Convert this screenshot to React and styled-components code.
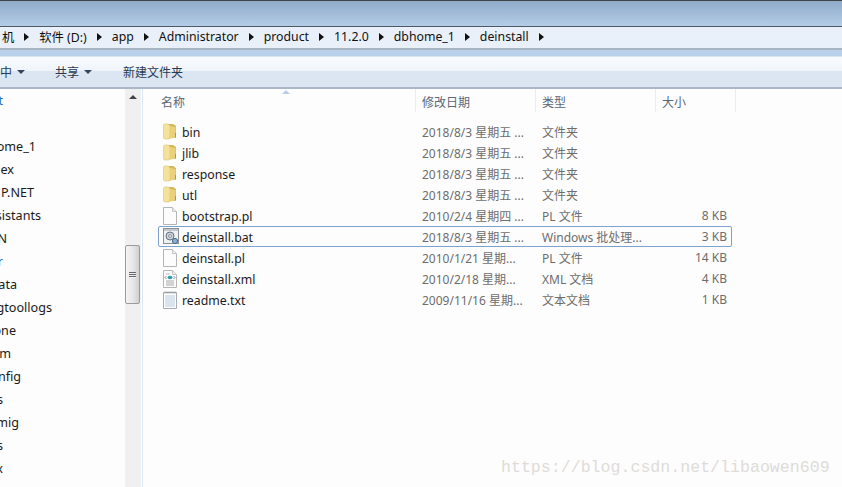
import React from 'react';
import styled, {createGlobalStyle} from 'styled-components';

const UI_FONT = '"Noto Sans", "Noto Sans CJK SC", sans-serif';

const GlobalStyle = createGlobalStyle`
  html, body {
    margin: 0;
    padding: 0;
    background: #fdfdfd;
  }
  body {
    font-family: ${UI_FONT};
    font-size: 12px;
    color: #1a1a1a;
  }
`

const crumbs = ['机', '软件 (D:)', 'app', 'Administrator', 'product', '11.2.0', 'dbhome_1', 'deinstall']

const tree = [
    {label: 't', end: 3, blue: true},
    {label: '', end: 0},
    {label: 'ome_1', end: 36},
    {label: 'ex', end: 14},
    {label: 'P.NET', end: 34},
    {label: 'sistants', end: 41},
    {label: 'N', end: 7},
    {label: 'r', end: 3, blue: true},
    {label: 'ata', end: 17},
    {label: 'gtoollogs', end: 52},
    {label: 'one', end: 16},
    {label: 'm', end: 11},
    {label: 'nfig', end: 21},
    {label: 's', end: 3},
    {label: 'mig', end: 19},
    {label: 's', end: 3},
    {label: 'x', end: 3},
]

const files = [
    {name: 'bin', date: '2018/8/3 星期五 ...', type: '文件夹', size: '', icon: 'folder'},
    {name: 'jlib', date: '2018/8/3 星期五 ...', type: '文件夹', size: '', icon: 'folder'},
    {name: 'response', date: '2018/8/3 星期五 ...', type: '文件夹', size: '', icon: 'folder'},
    {name: 'utl', date: '2018/8/3 星期五 ...', type: '文件夹', size: '', icon: 'folder'},
    {name: 'bootstrap.pl', date: '2010/2/4 星期四 ...', type: 'PL 文件', size: '8 KB', icon: 'blank'},
    {name: 'deinstall.bat', date: '2018/8/3 星期五 ...', type: 'Windows 批处理...', size: '3 KB', icon: 'bat', selected: true},
    {name: 'deinstall.pl', date: '2010/1/21 星期...', type: 'PL 文件', size: '14 KB', icon: 'blank'},
    {name: 'deinstall.xml', date: '2010/2/18 星期...', type: 'XML 文档', size: '4 KB', icon: 'xml'},
    {name: 'readme.txt', date: '2009/11/16 星期...', type: '文本文档', size: '1 KB', icon: 'txt'},
]

const FolderIcon = () => (
    <svg width="14" height="17" viewBox="0 0 14 17">
        <path d="M2 1h8l3 2v12H3z" fill="#d6b65a"/>
        <path d="M.5 2l1-1h4l1.500 2v10.500L6 16H1.500l-1-1z" fill="#f5e29a" stroke="#dcc477" strokeWidth=".6"/>
        <path d="M7 3l5.500 1v10.500L5.500 16 7 13z" fill="#ebd07c"/>
        <path d="M12 10h1v4h-1z" fill="#5aa6dc"/>
    </svg>
)

const PageIcon = ({children}) => (
    <svg width="14" height="18" viewBox="0 0 14 18">
        <path d="M.5.5h9l4 4v13H.5z" fill="#fcfcfc" stroke="#b5b5b5"/>
        <path d="M9.500.5v4h4" fill="#eee" stroke="#c4c4c4"/>
        {children}
    </svg>
)

const BatIcon = () => (
    <svg width="17" height="17" viewBox="0 0 17 17">
        <rect x=".5" y=".5" width="15" height="15" fill="#eef0f3" stroke="#8a8f96"/>
        <path d="M1 1h14v2H1z" fill="#c3c8cf"/>
        <circle cx="7" cy="8" r="4" fill="#cdd5de" stroke="#66717d"/>
        <circle cx="7" cy="8" r="1.500" fill="#eef0f3" stroke="#66717d" strokeWidth=".7"/>
        <circle cx="12" cy="13" r="2.600" fill="#8fb0d4" stroke="#47688c"/>
    </svg>
)

const XmlIcon = () => (
    <PageIcon>
        <path d="M3 4h4" stroke="#b9b9b9"/>
        <ellipse cx="7" cy="7.500" rx="2.500" ry="1.800" fill="#2f9fb5"/>
        <path d="M3.500 6L2 7.500 3.500 9M10.500 6L12 7.500 10.500 9" fill="none" stroke="#5d6f80" strokeWidth=".8"/>
        <path d="M3 11h8M3 13h8M3 15h8" stroke="#a9a9a9"/>
    </PageIcon>
)

const TxtIcon = () => (
    <svg width="15" height="18" viewBox="0 0 15 18">
        <path d="M.5 1.500h13v16H.5z" fill="#fdfdfd" stroke="#a8acb1"/>
        <path d="M2 .5v2M4 .5v2M6 .5v2M8 .5v2M10 .5v2M12 .5v2" stroke="#8f9499"/>
        <path d="M2 5h10M2 7h10M2 9h10M2 11h10M2 13h10M2 15h10" stroke="#b7cbe0"/>
    </svg>
)

const fileIcons = {
    folder: <FolderIcon/>,
    blank: <PageIcon/>,
    bat: <BatIcon/>,
    xml: <XmlIcon/>,
    txt: <TxtIcon/>,
}

const Caret = () => (
    <svg width="5" height="8" viewBox="0 0 5 8">
        <path d="M0 0l5 4-5 4z" fill="#111"/>
    </svg>
)

const App = () => {
    return (
        <Window>
            <GlobalStyle/>
            <TitleBar/>
            <AddressBar>
                {crumbs.map(c => (
                    <Crumb key={c}>
                        <span>{c}</span>
                        <Caret/>
                    </Crumb>
                ))}
            </AddressBar>
            <Strip/>
            <Toolbar>
                <ToolButton $width={55}>中<DownArrow/></ToolButton>
                <ToolButton $width={68}>共享<DownArrow/></ToolButton>
                <ToolButton>新建文件夹</ToolButton>
            </Toolbar>
            <Body>
                <Sidebar>
                    <Tree>
                        {tree.map((item, i) => (
                            <TreeRow key={i} $end={item.end} $blue={item.blue}>{item.label}</TreeRow>
                        ))}
                    </Tree>
                    <Scrollbar>
                        <ScrollUp/>
                        <Thumb>
                            <Grip/>
                            <Grip/>
                            <Grip/>
                        </Thumb>
                    </Scrollbar>
                </Sidebar>
                <Main>
                    <Header>
                        <SortMark/>
                        <HeadCell $w={255}>名称</HeadCell>
                        <HeadCell $w={120}>修改日期</HeadCell>
                        <HeadCell $w={120}>类型</HeadCell>
                        <HeadCell $w={80}>大小</HeadCell>
                    </Header>
                    <List>
                        {files.map(f => (
                            <Row key={f.name} $selected={f.selected}>
                                <NameCell>
                                    <IconBox>{fileIcons[f.icon]}</IconBox>
                                    <FileName>{f.name}</FileName>
                                </NameCell>
                                <DateCell>{f.date}</DateCell>
                                <TypeCell>{f.type}</TypeCell>
                                <SizeCell>{f.size}</SizeCell>
                            </Row>
                        ))}
                    </List>
                </Main>
            </Body>
            <Watermark>https://blog.csdn.net/libaowen609</Watermark>
        </Window>
    );
};

const Window = styled.div`
  position: relative;
  width: 842px;
  height: 487px;
  overflow: hidden;
  display: flex;
  flex-direction: column;
  background: #fdfdfd;
`
const TitleBar = styled.div`
  height: 26px;
  flex: none;
  border-top: 1px solid #3f4449;
  box-sizing: border-box;
  background: linear-gradient(#8fabc9, #b4cde7);
`
const AddressBar = styled.div`
  height: 24px;
  flex: none;
  box-sizing: border-box;
  border-top: 1px solid #4f5a66;
  border-bottom: 2px solid #a8b4c2;
  padding: 0 0 2px 2px;
  background: #e9f0f9;
  display: flex;
  align-items: center;
  font-size: 12.3px;
  color: #111;
`
const Crumb = styled.div`
  display: flex;
  align-items: center;
  gap: 10px;
  margin-right: 10px;
  white-space: nowrap;
`
const Strip = styled.div`
  height: 6px;
  flex: none;
  background: #b8d0e9;
`
const Toolbar = styled.div`
  height: 33px;
  flex: none;
  box-sizing: border-box;
  border-top: 1px solid #d9e4f1;
  border-bottom: 2px solid #a9b7c9;
  background: linear-gradient(#f9fbfe 0, #f0f5fb 45%, #dce6f3 46%, #dce6f3 100%);
  display: flex;
  align-items: center;
  font-size: 12px;
  color: #2a3950;
`
const ToolButton = styled.div`
  width: ${p => p.$width ? `${p.$width}px` : 'auto'};
  display: flex;
  align-items: center;
  gap: 5px;
  white-space: nowrap;
`
const DownArrow = styled.i`
  width: 0;
  height: 0;
  border-left: 4px solid transparent;
  border-right: 4px solid transparent;
  border-top: 4px solid #34465e;
`
const Body = styled.div`
  flex: 1;
  display: flex;
  min-height: 0;
`
const Sidebar = styled.div`
  width: 142px;
  flex: none;
  display: flex;
  border-right: 1px solid #d9e6f4;
`
const Tree = styled.div`
  width: 125px;
  flex: none;
  overflow: hidden;
`
const TreeRow = styled.div`
  height: 23px;
  line-height: 23px;
  width: ${p => p.$end}px;
  display: flex;
  justify-content: flex-end;
  white-space: nowrap;
  font-size: 12.6px;
  color: ${p => p.$blue ? '#2a6fc4' : '#1a1a1a'};
`
const Scrollbar = styled.div`
  width: 16px;
  flex: none;
  background: #f0f0f0;
  position: relative;
  display: flex;
  flex-direction: column;
  align-items: center;
`
const ScrollUp = styled.i`
  width: 0;
  height: 0;
  margin-top: 6px;
  border-left: 4px solid transparent;
  border-right: 4px solid transparent;
  border-bottom: 4px solid #444;
`
const Thumb = styled.div`
  position: absolute;
  top: 156px;
  left: 0;
  width: 15px;
  height: 59px;
  box-sizing: border-box;
  border: 1px solid #9b9b9b;
  border-radius: 2px;
  background: linear-gradient(90deg, #f4f4f4, #e6e6e6 55%, #cfcfcf);
  display: flex;
  flex-direction: column;
  align-items: center;
  justify-content: center;
  gap: 1px;
`
const Grip = styled.i`
  width: 7px;
  height: 1px;
  background: #666;
  box-shadow: 0 1px 0 #eee;
`
const Main = styled.div`
  flex: 1;
  min-width: 0;
`
const Header = styled.div`
  position: relative;
  height: 23px;
  display: flex;
  padding-left: 18px;
`
const SortMark = styled.i`
  position: absolute;
  left: 139px;
  top: 1px;
  width: 0;
  height: 0;
  border-left: 4px solid transparent;
  border-right: 4px solid transparent;
  border-bottom: 4px solid #b7cde6;
`
const HeadCell = styled.div`
  width: ${p => p.$w}px;
  box-sizing: border-box;
  padding-left: 6px;
  border-right: 1px solid #e8eef5;
  line-height: 27px;
  font-size: 12px;
  color: #5a6779;
  &:first-of-type {
    padding-left: 0;
  }
`
const List = styled.div`
  display: flex;
  flex-direction: column;
  padding: 9px 0 0 15px;
`
const Row = styled.div`
  width: 574px;
  height: 21px;
  box-sizing: border-box;
  display: flex;
  align-items: center;
  border: 1px solid ${p => p.$selected ? '#7da2ce' : 'transparent'};
  border-radius: 2px;
  font-size: 12px;
  color: #6d6d6d;
`
const NameCell = styled.div`
  width: 263px;
  flex: none;
  display: flex;
  align-items: center;
  font-size: 12.3px;
  color: #1a1a1a;
`
const FileName = styled.span`
  padding-top: 2px;
`
const IconBox = styled.span`
  width: 19px;
  margin-left: 4px;
  flex: none;
  display: flex;
  align-items: center;
`
const DateCell = styled.div`
  width: 120px;
  flex: none;
  white-space: nowrap;
`
const TypeCell = styled.div`
  width: 120px;
  flex: none;
  white-space: nowrap;
`
const SizeCell = styled.div`
  width: 65px;
  flex: none;
  text-align: right;
  white-space: nowrap;
`
const Watermark = styled.div`
  position: absolute;
  left: 501px;
  top: 458px;
  font-family: "Liberation Mono", monospace;
  font-size: 16.6px;
  color: #dedcd8;
  white-space: nowrap;
`
export default App;
